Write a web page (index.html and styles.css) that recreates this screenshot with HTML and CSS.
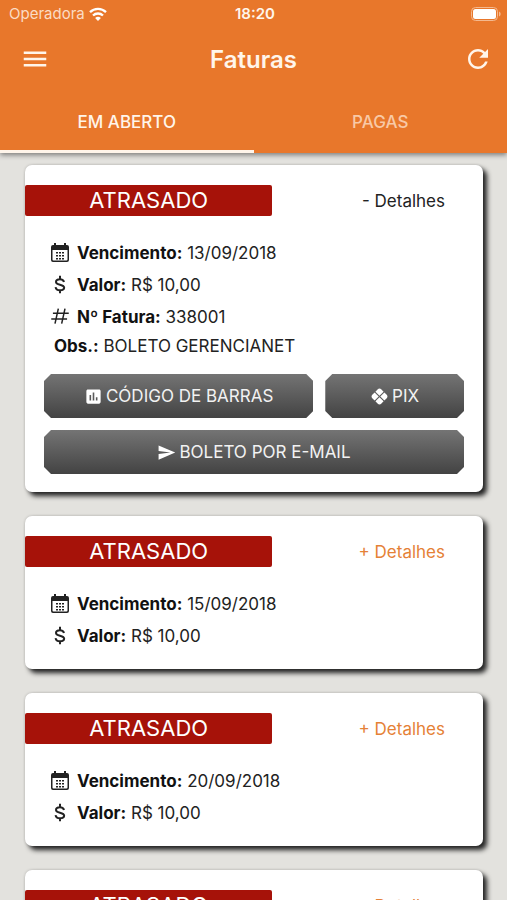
FILE: index.html
```html
<!DOCTYPE html>
<html lang="pt-BR">
<head>
    <meta charset="UTF-8">
    <meta name="viewport" content="width=device-width, initial-scale=1.0">
    <title>Faturas</title>
    <link rel="stylesheet" href="styles.css">
</head>
<body>
    <svg class="sprite" aria-hidden="true">
        <symbol id="calendar" viewBox="0 0 20 20">
            <path fill-rule="evenodd" d="M4 0h2v2h8V0h2v2h1a2 2 0 0 1 2 2v13a2 2 0 0 1-2 2H3a2 2 0 0 1-2-2V4a2 2 0 0 1 2-2h1zM2.500 7v9.500a1 1 0 0 0 1 1h13a1 1 0 0 0 1-1V7z"/>
            <path d="M6 9h2v1.500H6zM9 9h2v1.500H9zM12 9h2v1.500h-2zM6 12h2v1.500H6zM9 12h2v1.500H9zM12 12h2v1.500h-2zM6 15h2v1.500H6zM9 15h2v1.500H9zM12 15h2v1.500h-2z"/>
        </symbol>
        <symbol id="dollar" viewBox="0 0 24 24">
            <path fill="none" stroke="currentColor" stroke-width="2.400" d="M12 1v4M12 18v4M16.800 8.300C16.300 6.200 14.800 5 12 5 9.200 5 7.200 6.300 7.200 8.300c0 2 1.700 2.600 4.800 3.300 3.400.8 5 1.500 5 3.500 0 2.100-2.100 3.300-5 3.300-3 0-5-1.300-5.300-3.800"/>
        </symbol>
        <symbol id="hash" viewBox="0 0 24 24">
            <path fill="none" stroke="currentColor" stroke-width="1.800" d="M10 2 6 20M18 2l-4 18M3.500 7.500h19M1.500 14.500h19"/>
        </symbol>
    </svg>

    <header class="app-bar">
        <div class="status-bar">
            <span class="carrier">Operadora
                <svg class="wifi" viewBox="0 0 18 14" aria-hidden="true">
                    <path fill="none" stroke="currentColor" stroke-width="2.300" d="M1 5.200a11.500 11.500 0 0 1 16 0M4 8.500a7.200 7.200 0 0 1 10 0"/>
                    <path fill="currentColor" d="M9 14 6.100 11.100a4.100 4.100 0 0 1 5.800 0z"/>
                </svg>
            </span>
            <span class="clock">18:20</span>
            <svg class="battery" viewBox="0 0 30 14" aria-hidden="true">
                <rect x="0.500" y="0.500" width="26" height="13" rx="4" fill="none" stroke="#f4b98f"/>
                <rect x="2" y="2" width="23" height="10" rx="2.500" fill="#fff"/>
                <path fill="#f4b98f" d="M28 4.500c2.200 1 2.200 4 0 5z"/>
            </svg>
        </div>
        <div class="toolbar">
            <button class="icon-button menu" type="button" aria-label="Menu">
                <svg viewBox="0 0 24 24"><path d="M3 18h18v-2H3v2zm0-5h18v-2H3v2zm0-7v2h18V6H3z"/></svg>
            </button>
            <h1>Faturas</h1>
            <button class="icon-button refresh" type="button" aria-label="Atualizar">
                <svg viewBox="0 0 24 24"><path d="M17.650 6.350C16.200 4.900 14.210 4 12 4c-4.420 0-7.990 3.580-7.990 8s3.570 8 7.990 8c3.730 0 6.840-2.550 7.730-6h-2.080c-.82 2.330-3.040 4-5.650 4-3.310 0-6-2.690-6-6s2.690-6 6-6c1.660 0 3.140.69 4.220 1.780L13 11h7V4l-2.350 2.350z"/></svg>
            </button>
        </div>
        <nav class="tabs">
            <a class="tab active" href="#abertas">EM ABERTO</a>
            <a class="tab" href="#pagas">PAGAS</a>
        </nav>
    </header>

    <main class="invoices" id="abertas">
        <article class="card">
            <div class="card-header">
                <span class="badge">ATRASADO</span>
                <button class="details open" type="button">- Detalhes</button>
            </div>
            <p class="row"><svg class="row-icon"><use href="#calendar"/></svg><span><b>Vencimento:</b> 13/09/2018</span></p>
            <p class="row"><svg class="row-icon"><use href="#dollar"/></svg><span><b>Valor:</b> R$ 10,00</span></p>
            <p class="row"><svg class="row-icon"><use href="#hash"/></svg><span><b>Nº Fatura:</b> 338001</span></p>
            <p class="note"><b>Obs.:</b> BOLETO GERENCIANET</p>
            <div class="actions">
                <button class="action" type="button">
                    <svg viewBox="0 0 24 24"><path d="M19 3H5c-1.100 0-2 .9-2 2v14c0 1.100.9 2 2 2h14c1.100 0 2-.9 2-2V5c0-1.100-.9-2-2-2zM9 17H7v-7h2v7zm4 0h-2V7h2v10zm4 0h-2v-4h2v4z"/></svg>
                    CÓDIGO DE BARRAS
                </button>
                <button class="action" type="button">
                    <svg viewBox="0 0 24 24">
                        <g transform="rotate(45 12 12)">
                            <path d="M7.500 4h3.800v7.300H4V7.500A3.500 3.500 0 0 1 7.500 4zM12.700 4h3.800A3.500 3.500 0 0 1 20 7.500v3.800h-7.300zM4 12.700h7.300V20H7.500A3.500 3.500 0 0 1 4 16.500zM12.700 12.700H20v3.800a3.500 3.500 0 0 1-3.500 3.500h-3.800z"/>
                        </g>
                    </svg>
                    PIX
                </button>
                <button class="action wide" type="button">
                    <svg viewBox="0 0 24 24"><path d="M2.010 21 23 12 2.010 3 2 10l15 2-15 2z"/></svg>
                    BOLETO POR E-MAIL
                </button>
            </div>
        </article>

        <article class="card">
            <div class="card-header">
                <span class="badge">ATRASADO</span>
                <button class="details" type="button">+ Detalhes</button>
            </div>
            <p class="row"><svg class="row-icon"><use href="#calendar"/></svg><span><b>Vencimento:</b> 15/09/2018</span></p>
            <p class="row"><svg class="row-icon"><use href="#dollar"/></svg><span><b>Valor:</b> R$ 10,00</span></p>
        </article>

        <article class="card">
            <div class="card-header">
                <span class="badge">ATRASADO</span>
                <button class="details" type="button">+ Detalhes</button>
            </div>
            <p class="row"><svg class="row-icon"><use href="#calendar"/></svg><span><b>Vencimento:</b> 20/09/2018</span></p>
            <p class="row"><svg class="row-icon"><use href="#dollar"/></svg><span><b>Valor:</b> R$ 10,00</span></p>
        </article>

        <article class="card">
            <div class="card-header">
                <span class="badge">ATRASADO</span>
                <button class="details" type="button">+ Detalhes</button>
            </div>
        </article>
    </main>
</body>
</html>
```
FILE: styles.css
```css
* { box-sizing: border-box; }
body { margin: 0; height: 100vh; display: flex; flex-direction: column; overflow: hidden; background: #e3e2de; color: #222; font-family: Inter, "Liberation Sans", sans-serif; font-size: 17px; }
button { padding: 0; border: none; background: none; color: inherit; font: inherit; cursor: pointer; }
svg { fill: currentColor; }
.sprite { display: none; }

/* Header */
.app-bar { position: relative; flex: none; background: #e8772b; color: #fff5ea; box-shadow: 0 2px 5px rgba(0,0,0,0.45); }
.status-bar { display: grid; grid-template-columns: 1fr auto 1fr; align-items: center; height: 27px; padding: 0 6px 0 9px; }
.carrier { display: flex; align-items: center; gap: 4px; color: #fbdcc4; font-size: 15px; }
.wifi { width: 18px; height: 14px; color: #fff; }
.clock { font-weight: 600; font-size: 15px; }
.battery { justify-self: end; width: 30px; height: 14px; }
.toolbar { display: grid; grid-template-columns: 1fr auto 1fr; align-items: center; height: 64px; padding: 0 14px; }
h1 { margin: 0; font-size: 24px; font-weight: 600; }
.icon-button { width: 30px; height: 30px; }
.icon-button svg { display: block; width: 30px; height: 30px; }
.menu { margin-left: 6px; }
.refresh { justify-self: end; }
.tabs { display: flex; height: 62px; }
.tab { flex: 1; display: flex; align-items: center; justify-content: center; border-top: 2px solid transparent; border-bottom: 3px solid transparent; color: #f8c9a6; font-size: 17px; font-weight: 500; line-height: 20px; text-decoration: none; }
.tab.active { border-bottom-color: #fff5ea; color: #fff5ea; }

/* Invoice list */
.invoices { flex: 1; min-height: 0; display: flex; flex-direction: column; gap: 24px; padding: 12px 24px 24px 25px; overflow-y: auto; scrollbar-width: none; }
.card { flex: none; padding: 20px 0 17px; border-radius: 7px; background: #fff; box-shadow: 4px 4px 5px #222, 0 0 3px rgba(0,0,0,0.2); }
.card-header { display: flex; align-items: center; justify-content: space-between; margin-bottom: 21px; }
.badge { width: 54%; border-radius: 2px; background: #a61209; color: #fff; font-size: 22px; line-height: 31px; text-align: center; }
.details { margin-right: 38px; color: #e58136; line-height: 20px; }
.details.open { color: #222; }
.row { display: flex; align-items: center; gap: 7px; margin: 0; padding-left: 25px; line-height: 32px; }
.row-icon { width: 20px; height: 20px; }
.note { margin: 0; padding-left: 29px; line-height: 27px; }
b { color: #111; font-weight: 700; }

/* Buttons */
.actions { display: grid; grid-template-columns: 66fr 34fr; gap: 12px; margin: 14px 19px 0; }
.action { display: flex; align-items: center; justify-content: center; gap: 3px; height: 44px; background: linear-gradient(#747474, #434343); color: #f2f2f2; clip-path: polygon(7px 0, calc(100% - 7px) 0, 100% 7px, 100% calc(100% - 7px), calc(100% - 7px) 100%, 7px 100%, 0 calc(100% - 7px), 0 7px); }
.action svg { width: 19px; height: 19px; fill: #fff; }
.action.wide { grid-column: 1 / -1; margin-bottom: 1px; }
```
